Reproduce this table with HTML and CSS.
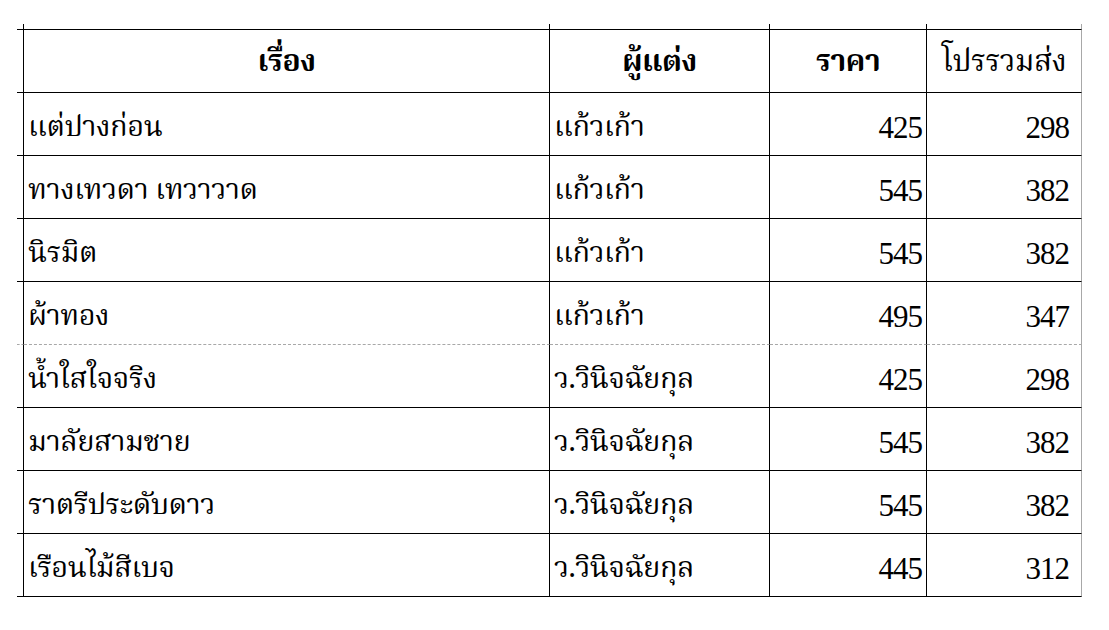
FILE: index.html
```html
<!DOCTYPE html>
<html lang="th">
<head>
<meta charset="utf-8">
<title>รายการหนังสือ</title>
<link rel="stylesheet" href="styles.css">
</head>
<body>
<div class="sheet">
  <div class="c stub"></div><div class="c stub"></div><div class="c stub"></div><div class="c stub"></div><div class="c stub last"></div>

  <div class="c pad"></div>
  <div class="c head bold">เรื่อง</div>
  <div class="c head bold">ผู้แต่ง</div>
  <div class="c head bold">ราคา</div>
  <div class="c head last">โปรรวมส่ง</div>

  <div class="c pad"></div><div class="c txt">แต่ปางก่อน</div><div class="c txt">แก้วเก้า</div><div class="c num">425</div><div class="c num last">298</div>
  <div class="c pad"></div><div class="c txt">ทางเทวดา เทวาวาด</div><div class="c txt">แก้วเก้า</div><div class="c num">545</div><div class="c num last">382</div>
  <div class="c pad"></div><div class="c txt">นิรมิต</div><div class="c txt">แก้วเก้า</div><div class="c num">545</div><div class="c num last">382</div>
  <div class="c pad brk"></div><div class="c txt brk">ผ้าทอง</div><div class="c txt brk">แก้วเก้า</div><div class="c num brk">495</div><div class="c num last brk">347</div>
  <div class="c pad"></div><div class="c txt">น้ำใสใจจริง</div><div class="c txt">ว.วินิจฉัยกุล</div><div class="c num">425</div><div class="c num last">298</div>
  <div class="c pad"></div><div class="c txt">มาลัยสามชาย</div><div class="c txt">ว.วินิจฉัยกุล</div><div class="c num">545</div><div class="c num last">382</div>
  <div class="c pad"></div><div class="c txt">ราตรีประดับดาว</div><div class="c txt">ว.วินิจฉัยกุล</div><div class="c num">545</div><div class="c num last">382</div>
  <div class="c pad"></div><div class="c txt">เรือนไม้สีเบจ</div><div class="c txt">ว.วินิจฉัยกุล</div><div class="c num">445</div><div class="c num last">312</div>
</div>
</body>
</html>
```
FILE: styles.css
```css
html, body {
  margin: 0;
  padding: 0;
  background: #ffffff;
}
body {
  font-family: "Norasi", "Noto Serif Thai", "Liberation Serif", serif;
  color: #000;
}
.sheet {
  display: grid;
  grid-template-columns: 7px 526px 220px 157px 155px;
  grid-template-rows: 6px;
  grid-auto-rows: 63px;
  margin: 24px 0 0 17px;
  width: max-content;
}
.c {
  box-sizing: border-box;
  border-right: 1px solid #000;
  border-bottom: 1px solid #000;
  display: flex;
  align-items: flex-end;
  font-size: 29px;
  letter-spacing: -0.5px;
  line-height: 1;
  padding-bottom: 12px;
  white-space: nowrap;
}
.stub, .pad { padding: 0; }
.last { border-right-color: #a8a8a8; }
.head { justify-content: center; padding-bottom: 14px; font-size: 30px; }
.bold { font-weight: bold; }
.txt { padding-left: 4px; }
.num {
  justify-content: flex-end;
  padding-right: 4px;
  font-family: "Liberation Serif", "Times New Roman", serif;
  font-size: 31px;
  letter-spacing: -1px;
}
.num.last { padding-right: 12px; }
.brk { border-bottom: 1px dashed #a8a8a8; }
```
